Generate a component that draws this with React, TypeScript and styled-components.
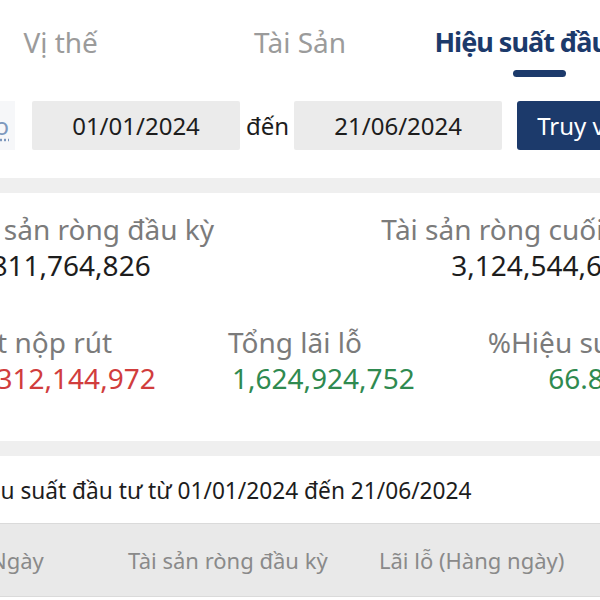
import React from 'react';
import styled, {createGlobalStyle} from 'styled-components';

const Colors = {
  navy: '#1c3a6b',
  tabIdle: '#9b9b9b',
  label: '#7b7b7b',
  text: '#1d1d1d',
  red: '#d13d3d',
  green: '#2f8a50',
  field: '#ebebeb',
  band: '#efefef',
  headBg: '#e9e9e9',
  headText: '#8a8a8a',
  link: '#7d98bd',
};

const GlobalStyle = createGlobalStyle`
  body {
    margin: 0;
    background: #ffffff;
    font-family: 'Noto Sans', 'Open Sans', sans-serif;
  }
`;

// viewport shows the middle of a wider phone screen
const Viewport = styled.div`
  width: 600px;
  height: 600px;
  overflow: hidden;
  background: #ffffff;
`;

const Screen = styled.div`
  width: 718px;
  margin-left: -59px;
`;

const TabBar = styled.nav`
  display: grid;
  grid-template-columns: repeat(3, 1fr);
  padding-top: 22px;
  height: 79px;
  box-sizing: border-box;
`;

const Tab = styled.div<{$active?: boolean}>`
  display: flex;
  flex-direction: column;
  align-items: center;

  span {
    font-size: ${({$active}) => ($active ? 27 : 28)}px;
    line-height: 40px;
    white-space: nowrap;
    letter-spacing: ${({$active}) => ($active ? '-1px' : '0')};
    font-weight: ${({$active}) => ($active ? 700 : 400)};
    color: ${({$active}) => ($active ? Colors.navy : Colors.tabIdle)};
  }

  &::after {
    content: '';
    display: ${({$active}) => ($active ? 'block' : 'none')};
    width: 53px;
    height: 7px;
    margin-top: 8px;
    border-radius: 4px;
    background: ${Colors.navy};
  }
`;

const DateRow = styled.div`
  display: flex;
  align-items: center;
  height: 49px;
  margin-top: 22px;
  padding-left: 4px;
`;

const PresetBox = styled.div`
  width: 70px;
  height: 100%;
  flex-shrink: 0;
  display: flex;
  align-items: center;
  justify-content: flex-end;
  padding-right: 6px;
  box-sizing: border-box;
  overflow: hidden;
  background: #f6f7f9;

  a {
    font-size: 24px;
    white-space: nowrap;
    color: ${Colors.link};
    text-decoration: underline dotted;
    text-underline-offset: 4px;
  }
`;

const DateField = styled.div<{$gap: number}>`
  width: 208px;
  height: 100%;
  flex-shrink: 0;
  display: flex;
  align-items: center;
  justify-content: center;
  background: ${Colors.field};
  border-radius: 2px;
  font-size: 24px;
  color: ${Colors.text};
  margin-left: ${({$gap}) => $gap}px;
`;

const ToWord = styled.span`
  font-size: 24px;
  color: ${Colors.text};
  margin-left: 6px;
`;

const QueryButton = styled.button`
  flex-shrink: 0;
  height: 100%;
  margin-left: 15px;
  padding: 0 20px;
  border: none;
  border-radius: 3px;
  background: ${Colors.navy};
  color: #ffffff;
  font-family: inherit;
  font-size: 24px;
  white-space: nowrap;
`;

const Band = styled.div<{$top: number}>`
  height: 15px;
  margin-top: ${({$top}) => $top}px;
  background: ${Colors.band};
`;

const Stats = styled.section`
  padding: 18px 19px 0;
  display: flex;
  flex-direction: column;
  gap: 41px;
`;

const StatRow = styled.div<{$cols: string}>`
  display: grid;
  grid-template-columns: ${({$cols}) => $cols};
`;

const StatCell = styled.div<{$align: 'left' | 'right'; $indent: number; $labelPad?: number}>`
  display: flex;
  flex-direction: column;
  align-items: ${({$align}) => ($align === 'left' ? 'flex-start' : 'flex-end')};
  white-space: nowrap;

  .label {
    font-size: 28px;
    line-height: 36px;
    color: ${Colors.label};
    ${({$align, $labelPad = 0}) => ($align === 'right' ? `padding-right: ${$labelPad}px;` : '')}
  }

  .value {
    font-size: 28px;
    line-height: 36px;
    ${({$align, $indent}) => ($align === 'left' ? `padding-left: ${$indent}px;` : `margin-right: ${$indent}px;`)}
  }
`;

const Value = styled.span<{$tone?: 'red' | 'green'}>`
  color: ${({$tone}) => ($tone === 'red' ? Colors.red : $tone === 'green' ? Colors.green : Colors.text)};
`;

const PeriodTitle = styled.h3`
  margin: 0;
  padding: 20px 0 0 24px;
  font-size: 22.7px;
  line-height: 30px;
  font-weight: 400;
  color: ${Colors.text};
  white-space: nowrap;
`;

const TableHead = styled.div`
  display: grid;
  grid-template-columns: 138px 251px 237px auto;
  align-items: center;
  height: 74px;
  margin-top: 17px;
  padding-left: 49px;
  box-sizing: border-box;
  background: ${Colors.headBg};
  border-top: 1px solid #dadada;
  border-bottom: 1px solid #dadada;

  span {
    font-size: 22px;
    color: ${Colors.headText};
    white-space: nowrap;
  }
`;

const App: React.FC = () => {
  return (
    <Viewport>
      <GlobalStyle />
      <Screen>
        <TabBar>
          <Tab>
            <span>Vị thế</span>
          </Tab>
          <Tab>
            <span>Tài Sản</span>
          </Tab>
          <Tab $active>
            <span>Hiệu suất đầu tư</span>
          </Tab>
        </TabBar>

        <DateRow>
          <PresetBox>
            <a>Báo cáo</a>
          </PresetBox>
          <DateField $gap={17}>01/01/2024</DateField>
          <ToWord>đến</ToWord>
          <DateField $gap={5}>21/06/2024</DateField>
          <QueryButton>Truy vấn</QueryButton>
        </DateRow>

        <Band $top={28} />

        <Stats>
          <StatRow $cols="1fr 1fr">
            <StatCell $align="left" $indent={8}>
              <span className="label">Tài sản ròng đầu kỳ</span>
              <Value className="value">3,811,764,826</Value>
            </StatCell>
            <StatCell $align="right" $indent={6}>
              <span className="label">Tài sản ròng cuối kỳ</span>
              <Value className="value">3,124,544,606</Value>
            </StatCell>
          </StatRow>
          <StatRow $cols="268px 1fr 1fr">
            <StatCell $align="left" $indent={4}>
              <span className="label">Net nộp rút</span>
              <Value className="value" $tone="red">-2,312,144,972</Value>
            </StatCell>
            <StatCell $align="left" $indent={4}>
              <span className="label">Tổng lãi lỗ</span>
              <Value className="value" $tone="green">1,624,924,752</Value>
            </StatCell>
            <StatCell $align="right" $indent={-3} $labelPad={4}>
              <span className="label">%Hiệu suất</span>
              <Value className="value" $tone="green">66.86%</Value>
            </StatCell>
          </StatRow>
        </Stats>

        <Band $top={45} />

        <PeriodTitle>Hiệu suất đầu tư từ 01/01/2024 đến 21/06/2024</PeriodTitle>

        <TableHead>
          <span>Ngày</span>
          <span>Tài sản ròng đầu kỳ</span>
          <span>Lãi lỗ (Hàng ngày)</span>
          <span>Lãi lỗ lũy kế</span>
        </TableHead>
      </Screen>
    </Viewport>
  );
};

export default App;
